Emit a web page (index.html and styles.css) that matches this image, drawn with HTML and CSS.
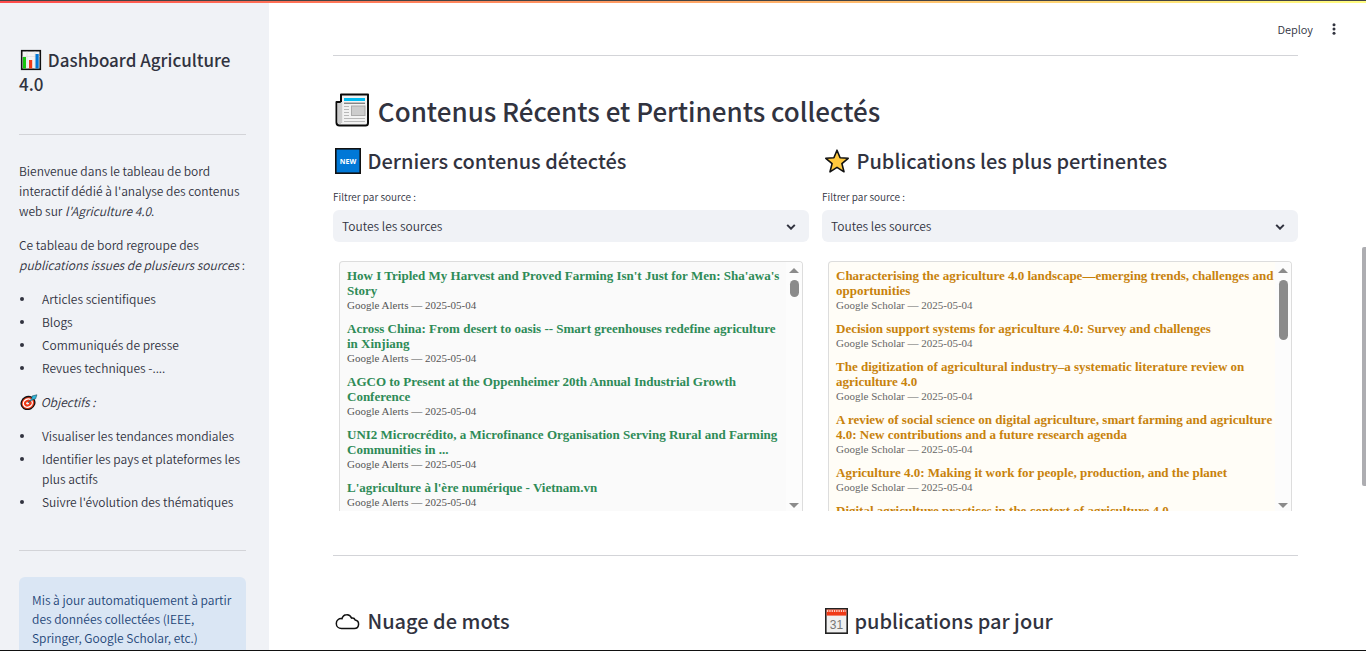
FILE: index.html
```html
<!DOCTYPE html>
<html lang="fr">
<head>
<meta charset="utf-8">
<meta name="viewport" content="width=device-width, initial-scale=1">
<title>Dashboard Agriculture 4.0</title>
<link rel="stylesheet" href="styles.css">
</head>
<body>
<div class="topline"></div>
<div class="app">
  <aside class="sidebar">
    <h1 class="side-title"><svg class="icon-chart" viewBox="0 0 24 22" aria-hidden="true"><rect x="2.7" y="1.7" width="18.6" height="18.6" fill="#f3f3f3" stroke="#111" stroke-width="1.6"/><path d="M3.5 7.5h17M8 2.5v17M16 2.5v17" stroke="#ddd" stroke-width=".7"/><rect x="4" y="8" width="3" height="11.5" fill="#16c60c"/><rect x="10" y="11" width="3.2" height="8.5" fill="#f03a17"/><rect x="16.5" y="5" width="3.2" height="14.5" fill="#0078d7"/></svg> Dashboard Agriculture 4.0</h1>
    <hr class="rule">
    <div class="prose">
      <p>Bienvenue dans le tableau de bord interactif dédié à l'analyse des contenus web sur <em>l'Agriculture 4.0</em>.</p>
      <p>Ce tableau de bord regroupe des <em>publications issues de plusieurs sources</em> :</p>
      <ul>
        <li>Articles scientifiques</li>
        <li>Blogs</li>
        <li>Communiqués de presse</li>
        <li>Revues techniques -....</li>
      </ul>
      <p><svg class="icon-target" viewBox="0 0 18 16" aria-hidden="true"><ellipse cx="8" cy="9" rx="7" ry="6.3" transform="rotate(-28 8 9)" fill="#f03a17" stroke="#111" stroke-width="1.3"/><ellipse cx="7.8" cy="9" rx="4.6" ry="4" transform="rotate(-28 8 9)" fill="none" stroke="#fff" stroke-width="1.3"/><circle cx="7.6" cy="9.2" r="1.3" fill="#fff"/><path d="M7.8 8.8l4-4.2.3-2.6 4.8-1.2-1.3 4-3.2 1z" fill="#31b8dc" stroke="#184b5b" stroke-width=".6"/></svg> <em>Objectifs :</em></p>
      <ul>
        <li>Visualiser les tendances mondiales</li>
        <li>Identifier les pays et plateformes les plus actifs</li>
        <li>Suivre l'évolution des thématiques</li>
      </ul>
    </div>
    <hr class="rule">
    <div class="info">Mis à jour automatiquement à partir des données collectées (IEEE, Springer, Google Scholar, etc.)</div>
  </aside>

  <main class="main">
    <div class="toolbar">
      <button class="deploy" type="button">Deploy</button>
      <button class="menu" type="button" aria-label="Menu"><svg viewBox="0 0 4 12" width="4" height="12"><circle cx="2" cy="1.8" r="1.5"/><circle cx="2" cy="6" r="1.5"/><circle cx="2" cy="10.2" r="1.5"/></svg></button>
    </div>
    <hr class="rule">
    <h2 class="title"><svg class="icon-news" viewBox="0 0 36 34" aria-hidden="true"><path d="M6 1.500h27v28.500q0 2.500-2.500 2.500h-26q-3 0-3-3V9H6z" fill="#f2f2f2" stroke="#0a0a0a" stroke-width="2" stroke-linejoin="round"/><path d="M2.500 10H6v21H4q-1.500 0-1.500-2z" fill="#ccc"/><path d="M6.500 9v21" stroke="#ccc" stroke-width="1.500"/><path d="M9 6.500h21" stroke="#00bcf2" stroke-width="3"/><path d="M9 10.200h21" stroke="#555"/><path d="M9 13.500h5M9 16.500h5M9 19.500h5M9 22.500h5M9 25.500h21M9 28.500h21" stroke="#b8b8b8"/><rect x="16.500" y="13" width="13.500" height="9.500" fill="#ccc" stroke="#aaa"/></svg> Contenus Récents et Pertinents collectés</h2>
    <div class="columns">
      <section class="column">
        <h3 class="subtitle"><svg class="icon" viewBox="0 0 26 26" aria-hidden="true"><rect x=".8" y=".8" width="24.400" height="24.400" fill="#0078d7" stroke="#111" stroke-width="1.600"/><text x="13" y="15.600" text-anchor="middle" class="new-text">NEW</text></svg> Derniers contenus détectés</h3>
        <label class="label" for="latest-source">Filtrer par source :</label>
        <div class="select-wrap">
          <select id="latest-source" class="select"><option>Toutes les sources</option></select>
          <svg class="chevron" viewBox="0 0 10 6" aria-hidden="true"><path d="M1.200 .9L5 4.700 8.800 .9"/></svg>
        </div>
        <div class="feed feed-green">
          <div class="feed-list">
            <article><a href="#">How I Tripled My Harvest and Proved Farming Isn't Just for Men: Sha'awa's Story</a><small>Google Alerts — 2025-05-04</small></article>
            <article><a href="#">Across China: From desert to oasis -- Smart greenhouses redefine agriculture in Xinjiang</a><small>Google Alerts — 2025-05-04</small></article>
            <article><a href="#">AGCO to Present at the Oppenheimer 20th Annual Industrial Growth Conference</a><small>Google Alerts — 2025-05-04</small></article>
            <article><a href="#">UNI2 Microcrédito, a Microfinance Organisation Serving Rural and Farming Communities in ...</a><small>Google Alerts — 2025-05-04</small></article>
            <article><a href="#">L'agriculture à l'ère numérique - Vietnam.vn</a><small>Google Alerts — 2025-05-04</small></article>
          </div>
          <div class="scrollbar" aria-hidden="true"><span class="arrow-up"></span><span class="thumb thumb-short"></span><span class="arrow-down"></span></div>
        </div>
      </section>
      <section class="column">
        <h3 class="subtitle"><svg class="icon" viewBox="0 0 26 26" aria-hidden="true"><path d="M13 2.200l3.100 7.600 8.100.5-6.300 5.300 2.100 8.200L13 19.300l-7 4.500 2.100-8.200-6.300-5.300 8.100-.5z" fill="#ffc83d" stroke="#111" stroke-width="1.600" stroke-linejoin="round"/></svg> Publications les plus pertinentes</h3>
        <label class="label" for="top-source">Filtrer par source :</label>
        <div class="select-wrap">
          <select id="top-source" class="select"><option>Toutes les sources</option></select>
          <svg class="chevron" viewBox="0 0 10 6" aria-hidden="true"><path d="M1.200 .9L5 4.700 8.800 .9"/></svg>
        </div>
        <div class="feed feed-gold">
          <div class="feed-list">
            <article><a href="#">Characterising the agriculture 4.0 landscape—emerging trends, challenges and opportunities</a><small>Google Scholar — 2025-05-04</small></article>
            <article><a href="#">Decision support systems for agriculture 4.0: Survey and challenges</a><small>Google Scholar — 2025-05-04</small></article>
            <article><a href="#">The digitization of agricultural industry–a systematic literature review on agriculture 4.0</a><small>Google Scholar — 2025-05-04</small></article>
            <article><a href="#">A review of social science on digital agriculture, smart farming and agriculture 4.0: New contributions and a future research agenda</a><small>Google Scholar — 2025-05-04</small></article>
            <article><a href="#">Agriculture 4.0: Making it work for people, production, and the planet</a><small>Google Scholar — 2025-05-04</small></article>
            <article><a href="#">Digital agriculture practices in the context of agriculture 4.0</a></article>
          </div>
          <div class="scrollbar" aria-hidden="true"><span class="arrow-up"></span><span class="thumb thumb-long"></span><span class="arrow-down"></span></div>
        </div>
      </section>
    </div>
    <hr class="rule">
    <div class="columns columns-bottom">
      <h3 class="subtitle"><svg class="icon" viewBox="0 0 26 26" aria-hidden="true"><path d="M6.500 20.500h12.800a4.300 4.300 0 0 0 .9-8.500c-.6-1.500-2-2.200-3.600-1.900C15.600 7.700 13.800 6.500 11.600 6.700 9.200 6.800 7.500 8.400 7 10.700c-3.200-.5-5.700 1.700-5.700 4.700 0 2.900 2.200 5.100 5.200 5.100z" fill="#fff" stroke="#111" stroke-width="1.500"/></svg> Nuage de mots</h3>
      <h3 class="subtitle"><svg class="icon icon-cal" viewBox="0 0 24 26" aria-hidden="true"><rect x="1.800" y=".8" width="21.400" height="24.400" fill="#f0f0f0" stroke="#222" stroke-width="1.600"/><path d="M2.600 1.600h19.800v6H2.600z" fill="#f03a17"/><path d="M3 3h19" stroke="#fff" stroke-width="1.500" stroke-dasharray="1.300 1"/><text x="12.500" y="20.500" text-anchor="middle" class="cal-text">31</text></svg> publications par jour</h3>
    </div>
    <div class="page-thumb" aria-hidden="true"></div>
  </main>
</div>
<div class="bottomline"></div>
</body>
</html>
```
FILE: styles.css
```css
* { box-sizing: border-box; }
body {
  margin: 0;
  height: 100vh;
  overflow: hidden;
  display: flex;
  flex-direction: column;
  color: #31333f;
  background: #fff;
  font-family: "Noto Sans CJK SC", "Noto Sans", sans-serif;
  font-weight: 350;
}
.topline {
  flex: none;
  height: 3px;
  border-top: 1px solid #444;
  background: linear-gradient(to right, #ff4b4b, #fffd80);
}
.bottomline { flex: none; height: 1px; background: #111; }
.app { flex: 1; min-height: 0; display: flex; }
.sidebar {
  flex: none;
  width: 269px;
  padding: 45px 23px 0 19px;
  overflow: hidden;
  background: #f0f2f6;
}
.main {
  position: relative;
  flex: 1;
  min-width: 0;
  padding: 52px 68px 0 64px;
  overflow: hidden;
}
.rule { margin: 0; border: 0; height: 1px; background: #d3d4d8; }
h1, h2, h3 { margin: 0; font-weight: 500; }

.side-title { font-size: 17px; line-height: 24px; margin-bottom: 38px; }
.icon-chart { width: 24px; height: 22px; margin-right: 1px; vertical-align: -4px; }
.prose { margin-right: -10px; padding: 26px 0 38px; font-size: 12px; line-height: 20px; }
.prose p { margin: 0 0 14px; }
.prose ul { margin: 0 0 14px; padding: 0; list-style: none; }
.prose ul:last-child { margin-bottom: 0; }
.prose li { display: flex; }
.prose li::before {
  content: "";
  flex: none;
  width: 4px;
  height: 4px;
  margin: 8px 18px 0 1px;
  border-radius: 50%;
  background: #31333f;
}
.prose li + li { margin-top: 3px; }
.icon-target { width: 18px; height: 16px; margin-left: 1px; vertical-align: -3px; }
.info {
  margin-top: 26px;
  padding: 13px 8px 13px 13px;
  min-height: 84px;
  border-radius: 6px;
  background: #dae6f4;
  color: #1d4577;
  font-size: 12px;
  line-height: 19px;
}

.toolbar {
  position: absolute;
  top: 16px;
  right: 28px;
  display: flex;
  align-items: center;
  gap: 17px;
}
.toolbar button {
  border: 0;
  padding: 0;
  background: none;
  color: #31333f;
  font: 350 11px/20px "Noto Sans CJK SC", sans-serif;
}
.toolbar .menu { display: flex; padding: 0 2px; }
.menu svg { fill: #31333f; }

.title { margin-top: 36px; font-size: 26px; line-height: 38px; }
.icon-news { width: 36px; height: 34px; margin: 0 1px 0 2px; vertical-align: -5px; }
.columns {
  display: grid;
  grid-template-columns: 1fr 1fr;
  gap: 13px;
  margin: 16px 0 44px;
}
.columns-bottom { margin: 50px 0 0; }
.column { min-width: 0; }
.subtitle { font-size: 20px; line-height: 30px; }
.icon { width: 26px; height: 26px; margin: 0 2px; vertical-align: -5px; }
.icon-cal { width: 24px; }
.new-text { font: 700 7px "Noto Sans", sans-serif; fill: #fff; }
.cal-text { font: 12px "Liberation Sans", sans-serif; fill: #777; }
.label { display: block; margin-top: 13px; font-size: 10px; line-height: 16px; }
.select-wrap { position: relative; margin-top: 5px; }
.select {
  display: block;
  width: 100%;
  height: 32px;
  padding: 0 30px 1px 9px;
  border: 0;
  border-radius: 6px;
  appearance: none;
  background: #f0f2f6;
  color: #31333f;
  font: 350 12px "Noto Sans CJK SC", sans-serif;
}
.chevron {
  position: absolute;
  top: 14px;
  right: 13px;
  width: 10px;
  height: 6px;
  fill: none;
  stroke: #31333f;
  stroke-width: 2;
  pointer-events: none;
}
.feed {
  display: flex;
  height: 250px;
  margin: 19px 6px 0;
  overflow: hidden;
  border: 1px solid #ddd;
  border-bottom: 0;
  border-radius: 4px 4px 0 0;
  font-family: "Liberation Serif", serif;
}
.feed-list { flex: 1; min-width: 0; padding: 6px 0 0 7px; }
.feed-green { background: #fafafa; }
.feed-gold { background: #fffdf7; }
.feed article { margin-bottom: 8px; }
.feed a {
  display: block;
  font-size: 13px;
  font-weight: 700;
  line-height: 15px;
  text-decoration: none;
}
.feed-green a { color: #2e8b57; }
.feed-gold a { color: #c8820c; }
.feed small { display: block; color: #555; font-size: 11px; line-height: 15px; }
.feed-gold small { color: #666; }
.scrollbar {
  flex: none;
  width: 16px;
  padding: 6px 3px 3px;
  display: flex;
  flex-direction: column;
  align-items: center;
  background: #fcfcfc;
}
.arrow-up { border: 5px solid transparent; border-top: 0; border-bottom-color: #8b8b8b; }
.arrow-down { margin-top: auto; border: 5px solid transparent; border-bottom: 0; border-top-color: #8b8b8b; }
.thumb { width: 9px; margin-top: 7px; border-radius: 5px; background: #8b8b8b; }
.thumb-short { height: 17px; }
.thumb-long { height: 60px; }
.page-thumb {
  position: absolute;
  top: 244px;
  right: 0;
  width: 4px;
  height: 239px;
  border-radius: 2px 0 0 2px;
  background: #adadb1;
}
```
